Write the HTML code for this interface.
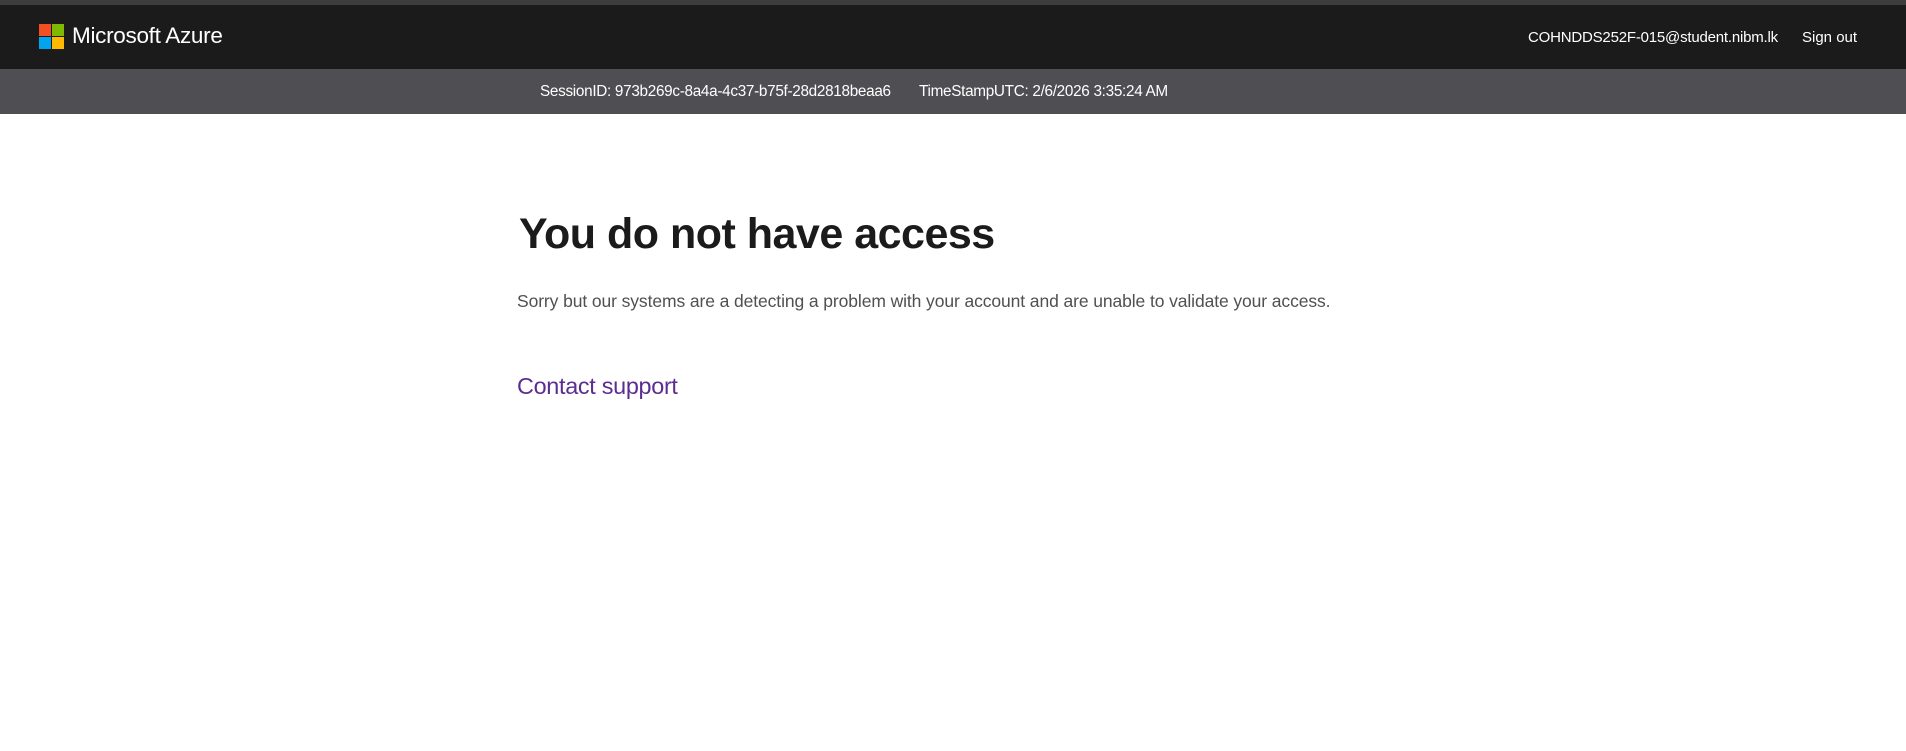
<!DOCTYPE html>
<html><head><meta charset="utf-8"><style>
html,body{margin:0;padding:0;width:1906px;height:751px;background:#fff;overflow:hidden;font-family:"Segoe UI","Liberation Sans",sans-serif}
.top{height:5px;background:#3d3d3d}
.bar{height:64px;background:#1b1b1b;position:relative;color:#fff}
.logo{position:absolute;left:39px;top:19px;width:26px;height:26px}
.logo i{position:absolute;width:12px;height:12px}
.brand{position:absolute;left:72px;top:18px;font-size:22.5px;letter-spacing:-0.3px}
.user{position:absolute;left:1528px;top:24px;font-size:15px;letter-spacing:-0.2px}
.so{position:absolute;left:1802px;top:24px;font-size:15px}
.sub{height:45px;background:#4f4e53;color:#fff;font-size:15.3px;position:relative}
.sub span{position:absolute;top:14px;letter-spacing:-0.3px}
h1{position:absolute;left:519px;top:210px;margin:0;font-size:43px;font-weight:600;color:#1b1b1b;letter-spacing:-0.5px}
p{position:absolute;left:517px;top:291px;margin:0;font-size:17.5px;color:#505050;letter-spacing:-0.1px}
a{position:absolute;left:517px;top:373px;font-size:23.4px;color:#5c2d91;text-decoration:none;letter-spacing:-0.3px}
</style></head><body>
<div class="top"></div>
<div class="bar">
<div class="logo"><i style="left:0;top:0;background:#f25022"></i><i style="left:13px;top:0;background:#7fba00"></i><i style="left:0;top:13px;background:#00a4ef"></i><i style="left:13px;top:13px;background:#ffb900"></i></div>
<div class="brand">Microsoft Azure</div>
<div class="user">COHNDDS252F-015@student.nibm.lk</div>
<div class="so">Sign out</div>
</div>
<div class="sub"><span style="left:540px">SessionID: 973b269c-8a4a-4c37-b75f-28d2818beaa6</span><span style="left:919px">TimeStampUTC: 2/6/2026 3:35:24 AM</span></div>
<h1>You do not have access</h1>
<p>Sorry but our systems are a detecting a problem with your account and are unable to validate your access.</p>
<a>Contact support</a>
</body></html>
